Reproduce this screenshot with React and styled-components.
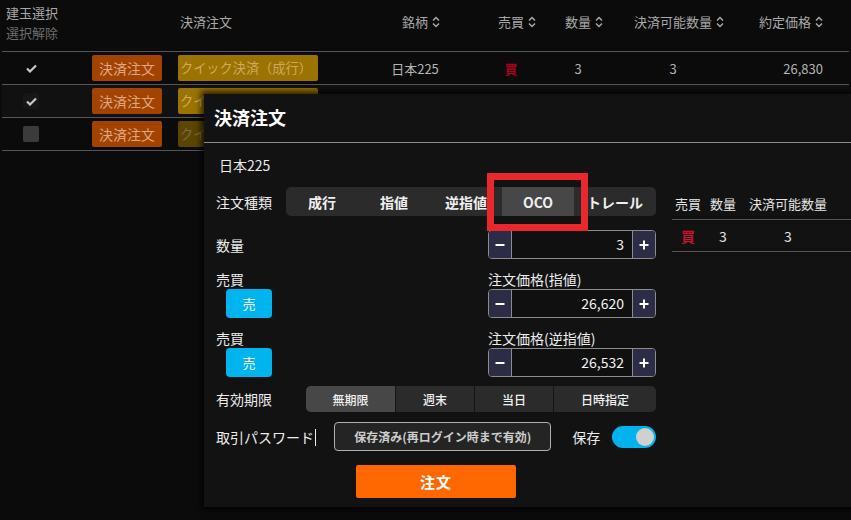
import React from "react"
import styled, { createGlobalStyle } from "styled-components"

const GlobalStyle = createGlobalStyle`
  html, body {
    margin: 0;
    padding: 0;
    background: #0b0b0b;
    overflow: hidden;
  }
  body {
    font-family: "Noto Sans CJK JP", "Noto Sans", sans-serif;
  }
  * { box-sizing: border-box; }
`

const Page = styled.div`
  position: relative;
  width: 851px;
  height: 520px;
  overflow: hidden;
  background: #0b0b0b;
`

const cols = "90px 86px 182px 110px 82px 52px 138px 81px 1fr"

const Table = styled.div`
  margin: 0 2px;
`

const HeadRow = styled.div`
  display: grid;
  grid-template-columns: ${cols};
  height: 52px;
  border-bottom: 1px solid #555;
  color: #a8a8a8;
  font-size: 13px;
`

const HeadCell = styled.div`
  padding-top: 12px;
  line-height: 20px;
  text-align: ${(p) => p.$align || "center"};
  padding-left: ${(p) => p.$pl || 0}px;
  white-space: nowrap;
`

const SelectHead = styled.div`
  padding: 3px 0 0 4px;
  line-height: 20px;
  display: flex;
  flex-direction: column;
`

const Muted = styled.span`
  color: #6c6c6c;
`

const SortWrap = styled.span`
  display: inline-block;
  width: 8px;
  height: 12px;
  margin-left: 4px;
  margin-right: ${(p) => (p.$flush ? 0 : -12)}px;
  vertical-align: -1px;
`

const Row = styled.div`
  display: grid;
  grid-template-columns: ${cols};
  height: 33px;
  align-items: center;
  border-bottom: 1px solid #555;
  background: ${(p) => (p.$alt ? "#111111" : "transparent")};
  color: #b3b3b3;
  font-size: 13px;
`

const Cell = styled.div`
  text-align: ${(p) => p.$align || "center"};
  white-space: nowrap;
`

const CheckCell = styled.div`
  padding-left: 21px;
  display: flex;
`

const CheckBox = styled.div`
  width: 16px;
  height: 16px;
  border-radius: 2px;
  background: ${(p) => p.$bg || "transparent"};
  display: flex;
  align-items: center;
  justify-content: center;
`

const CloseBtn = styled.div`
  width: 70px;
  height: 26px;
  border-radius: 2px;
  background: #a34300;
  color: #dfa587;
  font-size: 14px;
  line-height: 26px;
  text-align: center;
`

const QuickBtn = styled.div`
  width: 140px;
  height: 26px;
  border-radius: 2px;
  background: ${(p) => (p.$dim ? "#5b4500" : "#9b7300")};
  color: ${(p) => (p.$dim ? "#7c6a44" : "#cfa862")};
  font-size: 13.2px;
  line-height: 26px;
  padding-left: 2px;
  white-space: nowrap;
  overflow: hidden;
`

const Buy = styled.span`
  color: ${(p) => p.$c || "#a8001c"};
  font-weight: bold;
`

const Modal = styled.div`
  position: absolute;
  left: 204px;
  top: 94px;
  width: 690px;
  height: 413px;
  background: #121212;
  box-shadow: 0 0 6px 3px rgba(0, 0, 0, 0.7);
  color: #ececec;
`

const ModalTitle = styled.div`
  height: 49px;
  border-bottom: 1px solid #8a8a8a;
  padding: 0 0 3px 10px;
  display: flex;
  align-items: center;
  font-size: 18px;
  font-weight: bold;
  color: #fff;
`

const ModalBody = styled.div`
  display: flex;
`

const Form = styled.div`
  width: 452px;
  padding: 12px 0 0 12px;
  display: flex;
  flex-direction: column;
`

const Symbol = styled.div`
  margin-left: 3px;
  line-height: 20px;
  font-size: 14px;
`

const Line = styled.div`
  display: flex;
  align-items: center;
  height: ${(p) => p.$h || 29}px;
  margin-top: ${(p) => p.$mt || 0}px;
`

const TwoCol = styled.div`
  display: grid;
  grid-template-columns: 272px 168px;
  align-items: ${(p) => p.$align || "start"};
  margin-top: ${(p) => p.$mt || 0}px;
`

const Label = styled.div`
  width: ${(p) => (p.$w ? `${p.$w}px` : "auto")};
  flex: none;
  font-size: 14px;
  line-height: 18px;
  white-space: nowrap;
`

const Segments = styled.div`
  display: flex;
  width: ${(p) => p.$w}px;
  height: ${(p) => p.$h}px;
  background: #2b2b2b;
  border-radius: 5px;
  overflow: hidden;
`

const Segment = styled.div`
  width: ${(p) => (p.$w ? `${p.$w}px` : "auto")};
  flex: ${(p) => (p.$w ? "none" : 1)};
  display: flex;
  align-items: center;
  justify-content: center;
  background: ${(p) => (p.$active ? "#474747" : "transparent")};
  font-size: 14px;
  font-weight: bold;
  color: #f0f0f0;
  white-space: nowrap;
`

const TermSegment = styled(Segment)`
  font-size: 12px;
  font-weight: 500;
  border-right: ${(p) => (p.$last ? "none" : "1px solid #151515")};
`

const Stepper = styled.div`
  display: flex;
  width: 168px;
  height: 29px;
  border: 1px solid #8c8c8c;
  border-radius: 4px;
  overflow: hidden;
`

const StepBtn = styled.div`
  width: 22px;
  flex: none;
  background: #2c2c46;
  display: flex;
  align-items: center;
  justify-content: center;
`

const StepValue = styled.div`
  flex: 1;
  background: #101010;
  border-left: 1px solid #8c8c8c;
  border-right: 1px solid #8c8c8c;
  text-align: right;
  padding-right: 8px;
  line-height: 27px;
  font-size: 14px;
  color: #f4f4f4;
`

const Field = styled.div`
  display: flex;
  flex-direction: column;
  gap: 1px;
`

const SellBtn = styled.div`
  width: 46px;
  height: 29px;
  margin-left: 10px;
  border-radius: 4px;
  background: #00b4ee;
  color: #fff;
  font-size: 13px;
  display: flex;
  align-items: center;
  justify-content: center;
`

const Caret = styled.span`
  display: inline-block;
  width: 1px;
  height: 17px;
  background: #eee;
  margin-left: 1px;
  vertical-align: -3px;
`

const PassBtn = styled.div`
  width: 219px;
  height: 29px;
  border: 1px solid #b0b0b0;
  border-radius: 4px;
  background: #242424;
  color: #cdcdcd;
  font-size: 12px;
  font-weight: bold;
  display: flex;
  align-items: center;
  justify-content: center;
`

const SaveLabel = styled(Label)`
  margin-left: 21px;
`

const Toggle = styled.div`
  width: 44px;
  height: 22px;
  margin-left: 12px;
  border-radius: 11px;
  background: #00b3ee;
  display: flex;
  align-items: center;
  justify-content: flex-end;
  padding-right: 2px;
`

const Knob = styled.div`
  width: 18px;
  height: 18px;
  border-radius: 50%;
  background: #d0d0d0;
`

const Submit = styled.div`
  width: 160px;
  height: 33px;
  margin: 14px 0 0 140px;
  background: #ff6800;
  border-radius: 2px;
  color: #fff;
  font-size: 15px;
  font-weight: bold;
  letter-spacing: 1px;
  display: flex;
  align-items: center;
  justify-content: center;
`

const Side = styled.div`
  flex: 1;
  margin-left: 16px;
  padding-top: 44px;
`

const sideCols = "32px 38px 92px 1fr"

const SideHead = styled.div`
  display: grid;
  grid-template-columns: ${sideCols};
  height: 33px;
  align-items: center;
  border-bottom: 1px solid #555;
  font-size: 13px;
  color: #e4e4e4;
  text-align: center;
`

const SideRow = styled(SideHead)`
  height: 32px;
  font-size: 14px;
`

const Highlight = styled.div`
  position: absolute;
  left: 487px;
  top: 173px;
  width: 101px;
  height: 58px;
  border: 7px solid #e8282c;
`

const Sort = ({ flush }) => (
  <SortWrap $flush={flush}>
    <svg width="8" height="12" viewBox="0 0 8 12">
      <path d="M1 4.5L4 1.5L7 4.5M1 7.5L4 10.5L7 7.5" stroke="#a8a8a8" strokeWidth="1.5" fill="none" />
    </svg>
  </SortWrap>
)

const Check = () => (
  <svg width="11" height="9" viewBox="0 0 11 9">
    <path d="M1 4.5L4 7.5L10 1.5" stroke="#c8c8c8" strokeWidth="2.2" fill="none" />
  </svg>
)

const Minus = () => (
  <svg width="10" height="10" viewBox="0 0 10 10">
    <path d="M0.5 5H9.5" stroke="#fff" strokeWidth="2" />
  </svg>
)

const Plus = () => (
  <svg width="10" height="10" viewBox="0 0 10 10">
    <path d="M0.5 5H9.5M5 0.5V9.5" stroke="#fff" strokeWidth="2" />
  </svg>
)

const PriceStepper = ({ value }) => (
  <Stepper>
    <StepBtn><Minus /></StepBtn>
    <StepValue>{value}</StepValue>
    <StepBtn><Plus /></StepBtn>
  </Stepper>
)

const positions = [
  { check: "plain", alt: false, quick: false },
  { check: "dark", alt: true, quick: false },
  { check: "empty", alt: false, quick: true },
]

const boxBg = { plain: "transparent", dark: "#171717", empty: "#3b3b3b" }

function App() {
  return (
    <Page>
      <GlobalStyle />
      <Table>
        <HeadRow>
          <SelectHead>
            <span>建玉選択</span>
            <Muted>選択解除</Muted>
          </SelectHead>
          <HeadCell />
          <HeadCell $align="left" $pl={2}>決済注文</HeadCell>
          <HeadCell>銘柄<Sort /></HeadCell>
          <HeadCell>売買<Sort /></HeadCell>
          <HeadCell>数量<Sort /></HeadCell>
          <HeadCell>決済可能数量<Sort /></HeadCell>
          <HeadCell $align="right">約定価格<Sort flush /></HeadCell>
          <HeadCell />
        </HeadRow>
        {positions.map((p, i) => (
          <Row key={i} $alt={p.alt}>
            <CheckCell>
              <CheckBox $bg={boxBg[p.check]}>{p.check !== "empty" && <Check />}</CheckBox>
            </CheckCell>
            <Cell $align="left"><CloseBtn>決済注文</CloseBtn></Cell>
            <Cell $align="left"><QuickBtn $dim={p.quick}>クイック決済（成行）</QuickBtn></Cell>
            {i === 0 ? (
              <>
                <Cell>日本225</Cell>
                <Cell><Buy>買</Buy></Cell>
                <Cell>3</Cell>
                <Cell>3</Cell>
                <Cell $align="right">26,830</Cell>
                <Cell />
              </>
            ) : null}
          </Row>
        ))}
      </Table>

      <Modal>
        <ModalTitle>決済注文</ModalTitle>
        <ModalBody>
          <Form>
            <Symbol>日本225</Symbol>
            <Line $mt={12}>
              <Label $w={70}>注文種類</Label>
              <Segments $w={370} $h={29}>
                <Segment $w={72}>成行</Segment>
                <Segment $w={72}>指値</Segment>
                <Segment $w={72}>逆指値</Segment>
                <Segment $w={72} $active>OCO</Segment>
                <Segment>トレール</Segment>
              </Segments>
            </Line>
            <TwoCol $mt={14} $align="center">
              <Label>数量</Label>
              <PriceStepper value="3" />
            </TwoCol>
            <TwoCol $mt={11}>
              <Field>
                <Label>売買</Label>
                <SellBtn>売</SellBtn>
              </Field>
              <Field>
                <Label>注文価格(指値)</Label>
                <PriceStepper value="26,620" />
              </Field>
            </TwoCol>
            <TwoCol $mt={11}>
              <Field>
                <Label>売買</Label>
                <SellBtn>売</SellBtn>
              </Field>
              <Field>
                <Label>注文価格(逆指値)</Label>
                <PriceStepper value="26,532" />
              </Field>
            </TwoCol>
            <Line $mt={9} $h={26}>
              <Label $w={90}>有効期限</Label>
              <Segments $w={350} $h={26}>
                <TermSegment $w={90} $active>無期限</TermSegment>
                <TermSegment $w={79}>週末</TermSegment>
                <TermSegment $w={79}>当日</TermSegment>
                <TermSegment $last>日時指定</TermSegment>
              </Segments>
            </Line>
            <Line $mt={10}>
              <Label $w={118}>取引パスワード<Caret /></Label>
              <PassBtn>保存済み(再ログイン時まで有効)</PassBtn>
              <SaveLabel>保存</SaveLabel>
              <Toggle><Knob /></Toggle>
            </Line>
            <Submit>注文</Submit>
          </Form>
          <Side>
            <SideHead>
              <span>売買</span>
              <span>数量</span>
              <span>決済可能数量</span>
              <span />
            </SideHead>
            <SideRow>
              <Buy $c="#c8102e">買</Buy>
              <span>3</span>
              <span>3</span>
              <span />
            </SideRow>
          </Side>
        </ModalBody>
      </Modal>
      <Highlight />
    </Page>
  )
}

export default App
